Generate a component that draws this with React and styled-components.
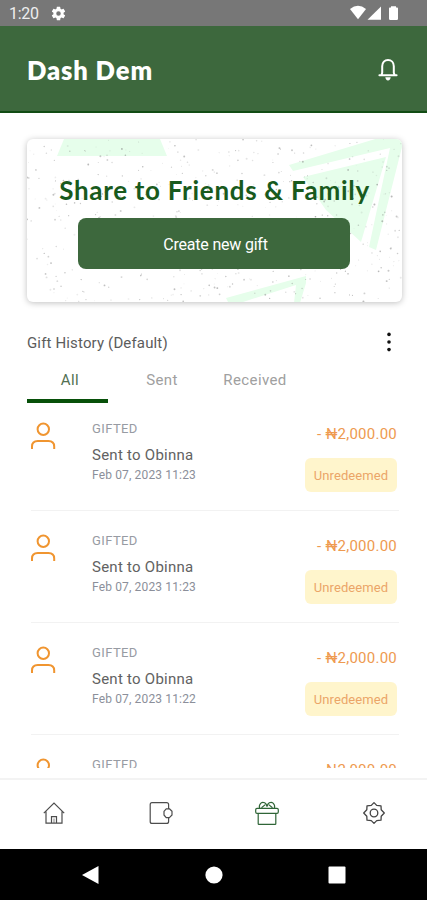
import React from 'react';
import styled, {createGlobalStyle} from 'styled-components';

const GlobalStyle = createGlobalStyle`
  *{
    box-sizing:border-box;
  }
  body{
    margin:0;
    background:#fff;
    font-family:Roboto, sans-serif;
  }
`;

const gifts = [
  {id: 1, name: 'Sent to Obinna', date: 'Feb 07, 2023 11:23', amount: '₦2,000.00'},
  {id: 2, name: 'Sent to Obinna', date: 'Feb 07, 2023 11:23', amount: '₦2,000.00'},
  {id: 3, name: 'Sent to Obinna', date: 'Feb 07, 2023 11:22', amount: '₦2,000.00'},
  {id: 4, name: 'Sent to Obinna', date: 'Feb 07, 2023 11:22', amount: '₦2,000.00'}
];

// fixed seed, so the speckles stay in place between renders
const makeSpeckles = (count) => {
  let seed = 17;
  const next = () => {
    seed = (seed * 16807) % 2147483647;
    return seed / 2147483647;
  };
  return Array.from({length: count}, () => ({
    x: next() * 375,
    y: next() * 163,
    r: 0.4 + next() * 0.6,
    o: 0.12 + next() * 0.4
  }));
};

const speckles = makeSpeckles(560);

const CardArt = () => (
  <Art viewBox='0 0 375 163'>
    <g fill='#e6feeb'>
      <path d='M37 0H133L140 17H30Z' />
      <path d='M262 26L355 -2H376V4L349 111L342 108L363 9L266 32Z' />
      <path d='M276 38L359 18L334 103L299 71Z' />
      <path d='M199 159L279 137L279 144L273 164H267L269 146L216 163H201Z' />
    </g>
    {
      speckles.map((dot, index) => (
        <circle key={index} cx={dot.x} cy={dot.y} r={dot.r} fill='#777' opacity={dot.o} />
      ))
    }
  </Art>
);

const StatusGear = () => (
  <svg width='17' height='17' viewBox='0 0 24 24' fill='#fff'>
    <path d='M19.14 12.94c.04-.3.06-.61.06-.94 0-.32-.02-.64-.07-.94l2.03-1.58a.49.49 0 0 0 .12-.61l-1.92-3.32a.49.49 0 0 0-.59-.22l-2.39.96c-.5-.38-1.03-.7-1.62-.94l-.36-2.54a.48.48 0 0 0-.48-.41h-3.84c-.24 0-.43.17-.47.41l-.36 2.54c-.59.24-1.13.57-1.62.94l-2.39-.96a.48.48 0 0 0-.59.22L2.74 8.87c-.12.21-.08.47.12.61l2.03 1.58c-.05.3-.09.63-.09.94s.02.64.07.94l-2.03 1.58a.49.49 0 0 0-.12.61l1.92 3.32c.12.22.37.29.59.22l2.39-.96c.5.38 1.03.7 1.62.94l.36 2.54c.05.24.24.41.48.41h3.84c.24 0 .44-.17.47-.41l.36-2.54c.59-.24 1.13-.56 1.62-.94l2.39.96c.22.08.47 0 .59-.22l1.92-3.32a.49.49 0 0 0-.12-.61zM12 15.2A3.2 3.2 0 1 1 12 8.8a3.2 3.2 0 0 1 0 6.4z' />
  </svg>
);

const StatusSignals = () => (
  <svg width='50' height='16' viewBox='0 0 50 16' fill='#fff'>
    <path d='M0 4Q8 -2.4 16 4L8 14.3Z' />
    <path d='M31 1.5V14.8H17.5Z' />
    <path d='M41 1.2H46V2.6H47.2Q48 2.6 48 3.6V13.8Q48 15 46.8 15H40.2Q39 15 39 13.8V3.6Q39 2.6 39.8 2.6H41Z' />
  </svg>
);

const BellIcon = () => (
  <svg width='20' height='24' viewBox='0 0 20 24' fill='none' stroke='#fff' strokeWidth='2'>
    <path d='M1.4 17.3H18.6M3.6 16.8L4.2 14.8V8.2C4.2 4.4 6.7 2 10 2S15.8 4.4 15.8 8.2V14.8L16.6 16.8' strokeLinecap='round' />
    <path d='M7.3 19.3H12.7Q12.3 22.4 10 22.4T7.3 19.3Z' fill='#fff' stroke='none' />
  </svg>
);

const MoreIcon = () => (
  <svg width='6' height='20' viewBox='0 0 6 20' fill='#111'>
    <circle cx='3' cy='2.4' r='1.8' />
    <circle cx='3' cy='10' r='1.8' />
    <circle cx='3' cy='17.6' r='1.8' />
  </svg>
);

const PersonIcon = () => (
  <svg width='26' height='28' viewBox='0 0 26 28' fill='none' stroke='#f09530' strokeWidth='2'>
    <circle cx='12.3' cy='7.2' r='5.7' />
    <path d='M1 27V24.4Q1 18.9 6.8 18.9H17.4Q23.2 18.9 23.2 24.4V27' />
  </svg>
);

const HomeIcon = () => (
  <svg width='24' height='26' viewBox='0 0 24 26' fill='none' stroke='#4d4d4d' strokeWidth='1.2'>
    <path d='M1.8 13.2L12 3L22.2 13.2M4 11.5V23.2H20V11.5M9.5 23V16.6H14.5V23' />
    <path d='M12 18.5V23' strokeWidth='.7' />
  </svg>
);

const WalletIcon = () => (
  <svg width='24' height='26' viewBox='0 0 24 26' fill='none' stroke='#4d4d4d' strokeWidth='1.2'>
    <path d='M19.6 9V4.6Q19.6 2.6 17.6 2.6H3Q1.2 2.6 1.2 4.4V21.4Q1.2 23.4 3 23.4H17.6Q19.6 23.4 19.6 21.4V17.4' />
    <path d='M17.2 8.8H20.4L23 11.3V15L20.4 17.6H17.2L15 15V11.3Z' strokeLinejoin='round' />
  </svg>
);

const GiftIcon = () => (
  <svg width='24' height='26' viewBox='0 0 24 26' fill='none' stroke='#2f6537' strokeWidth='1.2'>
    <path d='M2 8.4H22Q23.3 8.4 23.3 9.7V12Q23.3 13.3 22 13.3H2Q.7 13.3 .7 12V9.7Q.7 8.4 2 8.4Z' />
    <path d='M3.2 13.6V23.7Q3.2 24.4 3.9 24.4H20.1Q20.8 24.4 20.8 23.7V13.6' />
    <path d='M4.5 8.2Q3.8 5 5.9 3.1Q7.6 1.6 9.7 2.8Q11.4 3.8 12 6.5Q12.6 3.8 14.3 2.8Q16.4 1.6 18.1 3.1Q20.2 5 19.5 8.2M6.5 7.8L10.3 4.6M17.5 7.8L13.7 4.6' />
  </svg>
);

const SettingsIcon = () => (
  <svg width='24' height='26' viewBox='0 0 24 26' fill='none' stroke='#444' strokeWidth='1.3' strokeLinejoin='round'>
    <path d='M12 2.6L14.7 5.4L19 5.8L19.2 9.8L22.3 13L19.2 16.2L19 20.2L14.7 20.6L12 23.4L9.3 20.6L5 20.2L4.8 16.2L1.7 13L4.8 9.8L5 5.8L9.3 5.4Z' />
    <circle cx='12' cy='13' r='3.8' />
  </svg>
);

const SystemIcon = ({children}) => (
  <svg width='18' height='20' viewBox='0 0 18 20' fill='#fff'>{children}</svg>
);

const GiftRow = ({gift}) => (
  <Row>
    <Avatar><PersonIcon /></Avatar>
    <RowInfo>
      <p className='kind'>GIFTED</p>
      <p className='name'>{gift.name}</p>
      <p className='date'>{gift.date}</p>
    </RowInfo>
    <RowSide>
      <Amount>- {gift.amount}</Amount>
      <Badge>Unredeemed</Badge>
    </RowSide>
  </Row>
);

const App = () => (
  <Screen>
    <GlobalStyle />
    <StatusBar>
      <Clock>1:20</Clock>
      <StatusGear />
      <Signals><StatusSignals /></Signals>
    </StatusBar>
    <Header>
      <Brand>Dash Dem</Brand>
      <BellIcon />
    </Header>
    <Content>
      <ShareCard>
        <CardArt />
        <ShareTitle>Share to Friends &amp; Family</ShareTitle>
        <CreateButton>Create new gift</CreateButton>
      </ShareCard>
      <HistoryBar>
        <HistoryTitle>Gift History (Default)</HistoryTitle>
        <MoreIcon />
      </HistoryBar>
      <Tabs>
        <Tab $width={81} $active>All</Tab>
        <Tab $width={108}>Sent</Tab>
        <Tab $width={78}>Received</Tab>
      </Tabs>
      <List>
        {
          gifts.map((gift) => <GiftRow key={gift.id} gift={gift} />)
        }
      </List>
    </Content>
    <BottomNav>
      <NavItem><HomeIcon /></NavItem>
      <NavItem><WalletIcon /></NavItem>
      <NavItem><GiftIcon /></NavItem>
      <NavItem><SettingsIcon /></NavItem>
    </BottomNav>
    <SystemBar>
      <SystemIcon><path d='M0 10L16.5 1V19Z' /></SystemIcon>
      <SystemIcon><circle cx='9' cy='10' r='8.6' /></SystemIcon>
      <SystemIcon><rect x='.5' y='1.5' width='17' height='17' rx='1' /></SystemIcon>
    </SystemBar>
  </Screen>
);


const Screen = styled.div`
  width:427px;
  height:900px;
  display:flex;
  flex-direction:column;
  overflow:hidden;
  background:#fff;
`;

const StatusBar = styled.div`
  flex:none;
  height:26px;
  display:flex;
  align-items:center;
  padding:0 27px 0 9px;
  background:#777;
`;

const Clock = styled.span`
  width:41px;
  padding-top:1px;
  font-size:16px;
  letter-spacing:-.3px;
  color:#eee;
`;

const Signals = styled.div`
  display:flex;
  margin-left:auto;
`;

const Header = styled.header`
  flex:none;
  height:87px;
  display:flex;
  align-items:center;
  justify-content:space-between;
  padding:3px 29px 0 27px;
  background:#3d683d;
  border-bottom:2px solid #124c14;
`;

const Brand = styled.h1`
  margin:0;
  font-family:Lato, sans-serif;
  font-size:25.5px;
  font-weight:800;
  letter-spacing:.9px;
  color:#fff;
`;

const Content = styled.main`
  flex:none;
  height:655px;
  display:flex;
  flex-direction:column;
  padding:26px 25px 0 27px;
`;

const ShareCard = styled.section`
  position:relative;
  flex:none;
  height:163px;
  display:flex;
  flex-direction:column;
  align-items:center;
  padding:34px 2px 0 0;
  border-radius:6px;
  background:#fff;
  box-shadow:0 1px 6px rgba(0, 0, 0, .25);
  overflow:hidden;
`;

const Art = styled.svg`
  position:absolute;
  top:0;
  left:0;
  width:100%;
  height:100%;
`;

const ShareTitle = styled.h2`
  position:relative;
  height:34px;
  margin:0 0 11px;
  padding-left:2px;
  line-height:34px;
  font-family:Lato, sans-serif;
  font-size:26px;
  font-weight:700;
  letter-spacing:.7px;
  white-space:nowrap;
  color:#185a1d;
`;

const CreateButton = styled.button`
  position:relative;
  width:272px;
  height:51px;
  border:0;
  border-radius:8px;
  background:#3d683d;
  font-family:Roboto, sans-serif;
  font-size:16px;
  letter-spacing:-.2px;
  color:#fff;
  padding:2px 0 0 4px;
`;

const HistoryBar = styled.div`
  flex:none;
  height:26px;
  display:flex;
  align-items:center;
  justify-content:space-between;
  margin-top:27px;
  padding-right:10px;
`;

const HistoryTitle = styled.h3`
  margin:0;
  padding-top:1px;
  font-size:15px;
  font-weight:400;
  letter-spacing:.15px;
  color:#5c5c5c;
`;

const Tabs = styled.div`
  flex:none;
  height:48px;
  display:flex;
`;

const Tab = styled.div`
  width:${props => props.$width}px;
  padding-left:${props => props.$active ? 5 : 0}px;
  border-bottom:4px solid ${props => props.$active ? '#075009' : 'transparent'};
  line-height:51px;
  text-align:center;
  font-size:15px;
  letter-spacing:.4px;
  color:${props => props.$active ? '#527052' : '#a0a0a0'};
`;

const List = styled.div`
  flex:1;
  min-height:0;
  padding:0 3px 0 4px;
  overflow:hidden;
`;

const Row = styled.div`
  height:112px;
  display:flex;
  padding-top:21px;
  border-bottom:1px solid #f2f2f2;
  &:first-child{
    height:108px;
    padding-top:17px;
  }
`;

const Avatar = styled.div`
  width:61px;
  padding-top:2px;
`;

const RowInfo = styled.div`
  flex:1;
  p{
    margin:0;
    white-space:nowrap;
  }
  .kind{
    line-height:18px;
    font-size:13px;
    letter-spacing:.4px;
    color:#979ba3;
  }
  .name{
    margin-top:8px;
    line-height:18px;
    font-size:15px;
    letter-spacing:.25px;
    color:#626262;
  }
  .date{
    margin-top:2px;
    line-height:18px;
    font-size:12px;
    letter-spacing:.15px;
    color:#8b8f9a;
  }
`;

const RowSide = styled.div`
  display:flex;
  flex-direction:column;
  align-items:flex-end;
  padding:3px 2px 0 0;
`;

const Amount = styled.span`
  line-height:22px;
  font-size:15px;
  letter-spacing:.25px;
  color:#ee9a50;
`;

const Badge = styled.span`
  width:92px;
  height:34px;
  margin-top:13px;
  line-height:35px;
  border-radius:6px;
  text-align:center;
  background:#fff5cc;
  font-size:13px;
  letter-spacing:.1px;
  color:#eba568;
`;

const BottomNav = styled.nav`
  flex:none;
  height:71px;
  display:flex;
  margin-top:10px;
  padding:0 0 4px 1px;
  border-top:2px solid #f3f3f3;
`;

const NavItem = styled.div`
  flex:1;
  display:flex;
  align-items:center;
  justify-content:center;
`;

const SystemBar = styled.div`
  flex:1;
  display:flex;
  align-items:center;
  justify-content:space-between;
  padding:0 81px 0 82px;
  background:#000;
`;


export default App;
